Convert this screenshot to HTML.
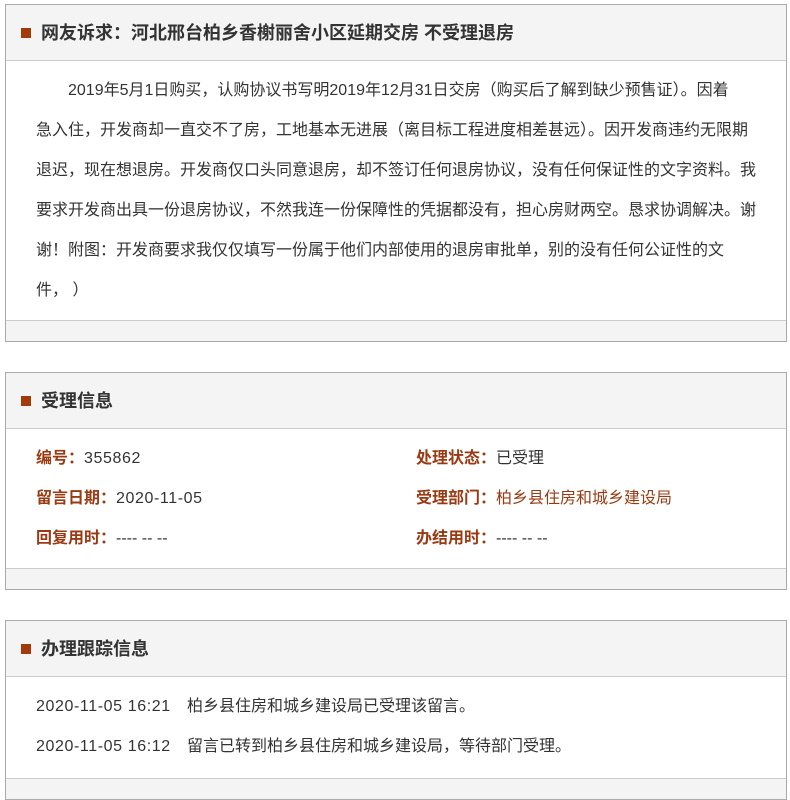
<!DOCTYPE html>
<html><head><meta charset="utf-8"><style>
*{margin:0;padding:0;box-sizing:border-box}
body{width:790px;height:781px;background:#fff;font-family:"Liberation Sans","Noto Sans CJK SC",sans-serif;color:#333;position:relative;overflow:hidden}
.box{position:absolute;left:5px;width:782px;border:1px solid #aaa;background:#fff}
.hd{height:56px;background:#f4f4f4;border-bottom:1px solid #ccc;position:relative}
.hd i{position:absolute;left:15px;top:23px;width:10px;height:10px;background:#a33a0a}
.hd b{position:absolute;left:35px;top:16px;font-size:18px;line-height:24px;color:#333}
.ft{position:absolute;left:0;right:0;bottom:0;height:21px;background:#f4f4f4;border-top:1px solid #ccc}
.t{position:absolute;font-size:16px;line-height:20px;white-space:nowrap}
.n{letter-spacing:0.6px}
.l{color:#9a3a12;font-weight:bold}
.br{color:#9a3a12}
</style></head><body>
<div class="box" style="top:4px;height:338px">
 <div class="hd"><i></i><b>网友诉求：河北邢台柏乡香榭丽舍小区延期交房 不受理退房</b></div>
 <div class="t" style="left:62px;top:76px">2019年5月1日购买，认购协议书写明2019年12月31日交房（购买后了解到缺少预售证）。因着</div>
 <div class="t" style="left:30px;top:116px">急入住，开发商却一直交不了房，工地基本无进展（离目标工程进度相差甚远）。因开发商违约无限期</div>
 <div class="t" style="left:30px;top:156px">退迟，现在想退房。开发商仅口头同意退房，却不签订任何退房协议，没有任何保证性的文字资料。我</div>
 <div class="t" style="left:30px;top:196px">要求开发商出具一份退房协议，不然我连一份保障性的凭据都没有，担心房财两空。恳求协调解决。谢</div>
 <div class="t" style="left:30px;top:236px">谢！附图：开发商要求我仅仅填写一份属于他们内部使用的退房审批单，别的没有任何公证性的文</div>
 <div class="t" style="left:30px;top:276px">件，&nbsp;）</div>
 <div class="ft"></div>
</div>
<div class="box" style="top:372px;height:218px">
 <div class="hd"><i></i><b>受理信息</b></div>
 <div class="t" style="left:30px;top:76px"><span class="l">编号：</span><span class="n">355862</span></div>
 <div class="t" style="left:410px;top:76px"><span class="l">处理状态：</span>已受理</div>
 <div class="t" style="left:30px;top:116px"><span class="l">留言日期：</span><span class="n">2020-11-05</span></div>
 <div class="t" style="left:410px;top:116px"><span class="l">受理部门：</span><span class="br">柏乡县住房和城乡建设局</span></div>
 <div class="t" style="left:30px;top:156px"><span class="l">回复用时：</span>---- -- --</div>
 <div class="t" style="left:410px;top:156px"><span class="l">办结用时：</span>---- -- --</div>
 <div class="ft"></div>
</div>
<div class="box" style="top:620px;height:180px">
 <div class="hd"><i></i><b>办理跟踪信息</b></div>
 <div class="t n" style="left:30px;top:76px">2020-11-05 16:21</div>
 <div class="t" style="left:181px;top:76px">柏乡县住房和城乡建设局已受理该留言。</div>
 <div class="t n" style="left:30px;top:116px">2020-11-05 16:12</div>
 <div class="t" style="left:181px;top:116px">留言已转到柏乡县住房和城乡建设局，等待部门受理。</div>
 <div class="ft" style="top:157px;bottom:auto"></div>
</div>
</body></html>
